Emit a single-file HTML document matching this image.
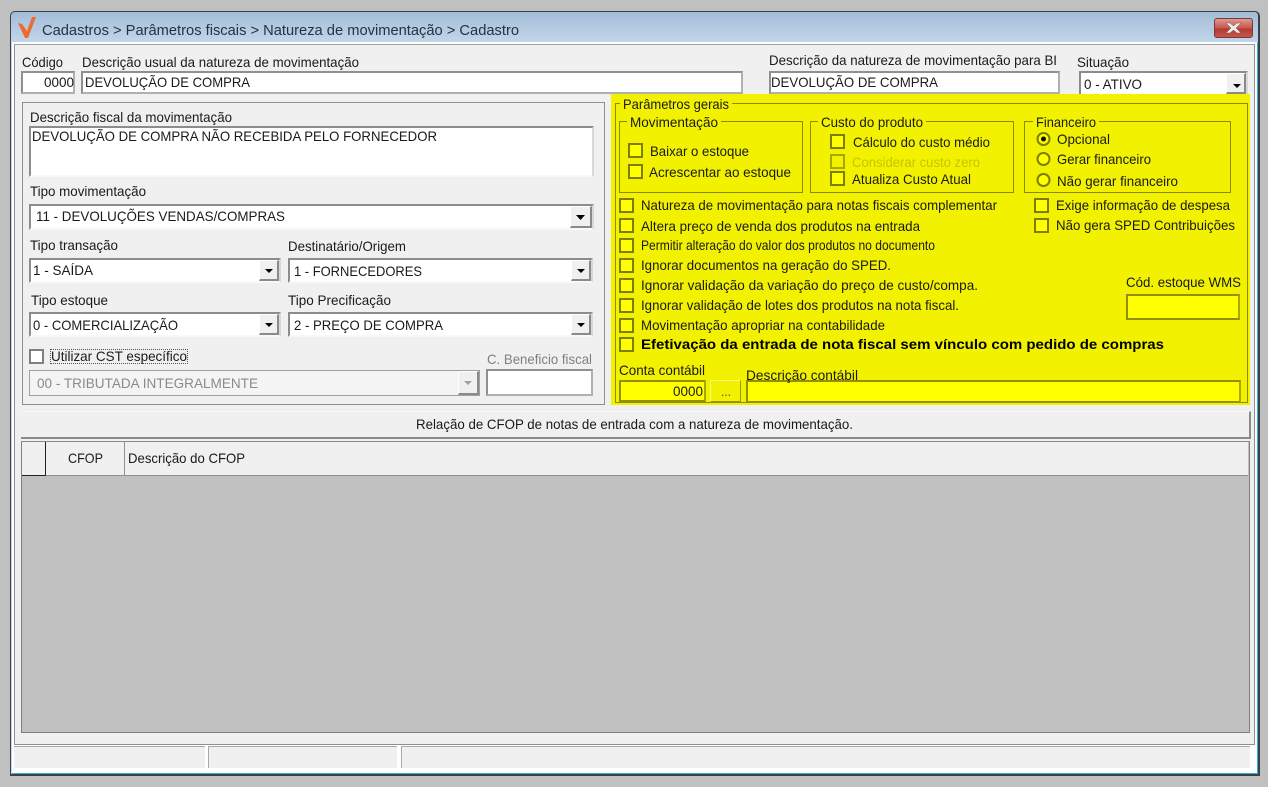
<!DOCTYPE html>
<html><head><meta charset="utf-8"><title>Cadastro</title>
<style>
html,body{margin:0;padding:0;width:1268px;height:787px;overflow:hidden;background:#c0c0c0}
#r{position:absolute;left:0;top:0;width:1268px;height:787px;overflow:hidden;filter:blur(.35px)}
#r div{position:absolute;box-sizing:border-box}
.f{background:#fff;border:2px solid #a0a0a0;border-top-color:#909090;border-left-color:#909090;border-right-color:#b0b0b0;border-bottom-color:#b0b0b0}
.c{background:#fff;border:2px solid #8c8c8c;border-right-color:#d8d8d8;border-bottom:2px solid #f8f8f8}
.y{background:#ff0;border:2px solid #8c8c00;border-color:#909000 #a8a800 #909000 #909000}
.b{background:#f0f0f0;border:1px solid #fff;border-right:2px solid #8a8a8a;border-bottom:2px solid #8a8a8a}
.k{background:#ff0;border:2px solid #7d7d00;width:15px;height:15px}
.g{border:1px solid #8c8c00}
.l{background:#f2f200;height:3px}
svg{position:absolute;left:0;top:0}
text{font-family:"Liberation Sans",sans-serif;font-size:14px;fill:#1a1a1a}
</style></head><body><div id="r">
<div style="left:10px;top:11px;width:1250px;height:765px;background:linear-gradient(#a3bdd8,#c6d9ec 34px);border:1px solid #3a4048;border-width:1px 2px 2px 1px;border-radius:5px 5px 0 0"></div>
<div style="left:12px;top:42px;width:1246px;height:732px;background:#fff;border-right:1px solid #33aed6;border-bottom:1px solid #33aed6"></div>
<div style="left:14px;top:44px;width:1241px;height:701px;background:#f0f0f0;border:1px solid #8f8f8f;border-top-color:#a0a0a0"></div>
<div style="left:14px;top:746px;width:1236px;height:23px;background:#f0f0f0;border-top:1px solid #a8a8a8"></div>
<div style="left:205px;top:746px;width:4px;height:23px;background:#fff;border-right:1px solid #a8a8a8"></div>
<div style="left:397px;top:746px;width:5px;height:23px;background:#fff;border-right:1px solid #a8a8a8"></div>
<div style="left:14px;top:768px;width:1243px;height:4px;background:#fff"></div>

<div style="left:1214px;top:18px;width:39px;height:20px;border:1px solid #7b3a38;border-radius:3px;background:linear-gradient(#dd9a92,#c8584c 50%,#b43a2c 55%,#c2584a)"></div>

<div class="f" style="left:21px;top:71px;width:54px;height:23px"></div>
<div class="f" style="left:81px;top:71px;width:662px;height:23px"></div>
<div class="f" style="left:769px;top:71px;width:291px;height:23px"></div>
<div class="c" style="left:1079px;top:71px;width:169px;height:26px"></div>
<div class="b" style="left:1226px;top:73px;width:20px;height:21px"></div>

<div style="left:22px;top:102px;width:583px;height:303px;border:1px solid #8f8f8f;border-width:1px"></div>
<div class="c" style="left:29px;top:126px;width:565px;height:51px"></div>
<div class="c" style="left:29px;top:204px;width:565px;height:26px"></div>
<div class="b" style="left:570px;top:206px;width:22px;height:22px"></div>
<div class="c" style="left:29px;top:258px;width:252px;height:25px"></div>
<div class="b" style="left:259px;top:260px;width:20px;height:21px"></div>
<div class="c" style="left:288px;top:258px;width:305px;height:25px"></div>
<div class="b" style="left:571px;top:260px;width:20px;height:21px"></div>
<div class="c" style="left:29px;top:312px;width:252px;height:25px"></div>
<div class="b" style="left:259px;top:314px;width:20px;height:21px"></div>
<div class="c" style="left:288px;top:312px;width:305px;height:25px"></div>
<div class="b" style="left:571px;top:314px;width:20px;height:21px"></div>
<div style="left:29px;top:349px;width:15px;height:15px;background:#fff;border:2px solid #808080"></div>
<div style="left:50px;top:349px;width:138px;height:15px;border:1px dotted #555"></div>
<div style="left:29px;top:370px;width:451px;height:26px;background:#f4f4f4;border:1px solid #a0a0a0"></div>
<div class="b" style="left:458px;top:371px;width:21px;height:24px"></div>
<div class="f" style="left:486px;top:369px;width:107px;height:27px"></div>

<div style="left:611px;top:94px;width:639px;height:311px;background:#f2f200"></div>
<div class="g" style="left:615px;top:103px;width:633px;height:300px;border-color:#8c8c00"></div>
<div class="g" style="left:619px;top:121px;width:184px;height:72px"></div>
<div class="g" style="left:810px;top:121px;width:204px;height:72px"></div>
<div class="g" style="left:1024px;top:121px;width:207px;height:72px"></div>
<div class="l" style="left:620px;top:102px;width:112px"></div>
<div class="l" style="left:627px;top:120px;width:94px"></div>
<div class="l" style="left:818px;top:120px;width:108px"></div>
<div class="l" style="left:1033px;top:120px;width:66px"></div>

<div class="k" style="left:628px;top:143px"></div>
<div class="k" style="left:628px;top:164px"></div>
<div class="k" style="left:830px;top:134px"></div>
<div class="k" style="left:830px;top:154px;background:#f2f200;border-color:#a8a800"></div>
<div class="k" style="left:830px;top:171px"></div>
<div class="k" style="left:619px;top:198px"></div>
<div class="k" style="left:619px;top:218px"></div>
<div class="k" style="left:619px;top:238px"></div>
<div class="k" style="left:619px;top:258px"></div>
<div class="k" style="left:619px;top:278px"></div>
<div class="k" style="left:619px;top:298px"></div>
<div class="k" style="left:619px;top:318px"></div>
<div class="k" style="left:619px;top:337px"></div>
<div class="k" style="left:1034px;top:198px"></div>
<div class="k" style="left:1034px;top:218px"></div>
<div class="y" style="left:1126px;top:294px;width:114px;height:26px"></div>
<div class="y" style="left:619px;top:380px;width:87px;height:22px"></div>
<div style="left:710px;top:380px;width:31px;height:22px;background:#f2f200;border:1px solid #fafa80;border-right:1px solid #9a9a00;border-bottom:1px solid #9a9a00"></div>
<div class="y" style="left:746px;top:380px;width:495px;height:23px"></div>

<div style="left:21px;top:411px;width:1230px;height:28px;background:#f0f0f0;border-top:1px solid #f8f8f8;border-right:2px solid #8a8a8a;border-bottom:2px solid #8a8a8a"></div>
<div style="left:21px;top:441px;width:1229px;height:292px;background:#c0c0c0;border:1px solid #7f7f7f;border-top-color:#8a8a8a"></div>
<div style="left:22px;top:442px;width:1226px;height:34px;background:#f0f0f0;border-bottom:1px solid #909090"></div>
<div style="left:22px;top:442px;width:24px;height:34px;background:#f0f0f0;border-right:1px solid #202020;border-bottom:1px solid #202020"></div>
<div style="left:124px;top:442px;width:1px;height:34px;background:#909090"></div>

<svg width="1268" height="787" viewBox="0 0 1268 787">
<path d="M18 23 L22 24 L27 31 L32 17 L36 17 L28 38 L25 38 Z" fill="#ef6a2c"/>
<path d="M1226 23 L1230 23 L1233.500 26 L1237 23 L1241 23 L1236 28 L1241 33 L1237 33 L1233.500 30 L1230 33 L1226 33 L1231 28 Z" fill="#ececec" stroke="#8c5048" stroke-width=".5"/>
<g fill="#000">
<path d="M1233 84 h8 l-4 4z"/><path d="M576 215 h9 l-4.500 5z"/><path d="M265 269 h8 l-4 4z"/><path d="M577 269 h8 l-4 4z"/><path d="M265 323 h8 l-4 4z"/><path d="M577 323 h8 l-4 4z"/>
</g>
<path d="M464 381 h8 l-4 4z" fill="#a0a0a0"/>
<g fill="#ff0" stroke="#7d7d00" stroke-width="2">
<circle cx="1043.500" cy="139" r="6"/><circle cx="1043.500" cy="159" r="6"/><circle cx="1043.500" cy="180" r="6"/>
</g>
<circle cx="1043.500" cy="139" r="2.500" fill="#111"/>

<text x="42" y="35" textLength="477" lengthAdjust="spacingAndGlyphs" style="font-size:15px;fill:#26323e">Cadastros &gt; Parâmetros fiscais &gt; Natureza de movimentação &gt; Cadastro</text>
<text x="22" y="67" textLength="41" lengthAdjust="spacingAndGlyphs">Código</text>
<text x="82" y="67" textLength="277" lengthAdjust="spacingAndGlyphs">Descrição usual da natureza de movimentação</text>
<text x="769" y="65" textLength="288" lengthAdjust="spacingAndGlyphs">Descrição da natureza de movimentação para BI</text>
<text x="1077" y="67" textLength="52" lengthAdjust="spacingAndGlyphs">Situação</text>
<text x="44" y="87" textLength="30" lengthAdjust="spacingAndGlyphs">0000</text>
<text x="85" y="87" textLength="165" lengthAdjust="spacingAndGlyphs">DEVOLUÇÃO DE COMPRA</text>
<text x="771" y="87" textLength="167" lengthAdjust="spacingAndGlyphs">DEVOLUÇÃO DE COMPRA</text>
<text x="1084" y="89" textLength="58" lengthAdjust="spacingAndGlyphs">0 - ATIVO</text>
<text x="30" y="122" textLength="202" lengthAdjust="spacingAndGlyphs">Descrição fiscal da movimentação</text>
<text x="32" y="141" textLength="405" lengthAdjust="spacingAndGlyphs">DEVOLUÇÃO DE COMPRA NÃO RECEBIDA PELO FORNECEDOR</text>
<text x="30" y="196" textLength="116" lengthAdjust="spacingAndGlyphs">Tipo movimentação</text>
<text x="36" y="221" textLength="249" lengthAdjust="spacingAndGlyphs">11 - DEVOLUÇÕES VENDAS/COMPRAS</text>
<text x="30" y="250" textLength="88" lengthAdjust="spacingAndGlyphs">Tipo transação</text>
<text x="33" y="275" textLength="60" lengthAdjust="spacingAndGlyphs">1 - SAÍDA</text>
<text x="288" y="251" textLength="118" lengthAdjust="spacingAndGlyphs">Destinatário/Origem</text>
<text x="294" y="276" textLength="128" lengthAdjust="spacingAndGlyphs">1 - FORNECEDORES</text>
<text x="31" y="305" textLength="77" lengthAdjust="spacingAndGlyphs">Tipo estoque</text>
<text x="33" y="330" textLength="145" lengthAdjust="spacingAndGlyphs">0 - COMERCIALIZAÇÃO</text>
<text x="288" y="305" textLength="103" lengthAdjust="spacingAndGlyphs">Tipo Precificação</text>
<text x="294" y="330" textLength="149" lengthAdjust="spacingAndGlyphs">2 - PREÇO DE COMPRA</text>
<text x="51" y="361" textLength="136" lengthAdjust="spacingAndGlyphs">Utilizar CST específico</text>
<text x="37" y="388" textLength="221" lengthAdjust="spacingAndGlyphs" style="fill:#8a8a8a">00 - TRIBUTADA INTEGRALMENTE</text>
<text x="487" y="364" textLength="105" lengthAdjust="spacingAndGlyphs" style="fill:#808080">C. Beneficio fiscal</text>

<text x="623" y="109" textLength="106" lengthAdjust="spacingAndGlyphs">Parâmetros gerais</text>
<text x="630" y="127" textLength="88" lengthAdjust="spacingAndGlyphs">Movimentação</text>
<text x="821" y="127" textLength="102" lengthAdjust="spacingAndGlyphs">Custo do produto</text>
<text x="1036" y="127" textLength="60" lengthAdjust="spacingAndGlyphs">Financeiro</text>
<text x="650" y="156" textLength="99" lengthAdjust="spacingAndGlyphs">Baixar o estoque</text>
<text x="649" y="177" textLength="142" lengthAdjust="spacingAndGlyphs">Acrescentar ao estoque</text>
<text x="853" y="147" textLength="137" lengthAdjust="spacingAndGlyphs">Cálculo do custo médio</text>
<text x="852" y="167" textLength="128" lengthAdjust="spacingAndGlyphs" style="fill:#c4c400">Considerar custo zero</text>
<text x="852" y="184" textLength="119" lengthAdjust="spacingAndGlyphs">Atualiza Custo Atual</text>
<text x="1057" y="144" textLength="53" lengthAdjust="spacingAndGlyphs">Opcional</text>
<text x="1057" y="164" textLength="94" lengthAdjust="spacingAndGlyphs">Gerar financeiro</text>
<text x="1057" y="186" textLength="121" lengthAdjust="spacingAndGlyphs">Não gerar financeiro</text>
<text x="641" y="210" textLength="356" lengthAdjust="spacingAndGlyphs">Natureza de movimentação para notas fiscais complementar</text>
<text x="641" y="231" textLength="279" lengthAdjust="spacingAndGlyphs">Altera preço de venda dos produtos na entrada</text>
<text x="641" y="250" textLength="294" lengthAdjust="spacingAndGlyphs">Permitir alteração do valor dos produtos no documento</text>
<text x="641" y="270" textLength="250" lengthAdjust="spacingAndGlyphs">Ignorar documentos na geração do SPED.</text>
<text x="641" y="290" textLength="337" lengthAdjust="spacingAndGlyphs">Ignorar validação da variação do preço de custo/compa.</text>
<text x="641" y="310" textLength="318" lengthAdjust="spacingAndGlyphs">Ignorar validação de lotes dos produtos na nota fiscal.</text>
<text x="641" y="330" textLength="244" lengthAdjust="spacingAndGlyphs">Movimentação apropriar na contabilidade</text>
<text x="641" y="349" textLength="523" lengthAdjust="spacingAndGlyphs" style="font-weight:bold;fill:#000">Efetivação da entrada de nota fiscal sem vínculo com pedido de compras</text>
<text x="1056" y="210" textLength="174" lengthAdjust="spacingAndGlyphs">Exige informação de despesa</text>
<text x="1056" y="230" textLength="179" lengthAdjust="spacingAndGlyphs">Não gera SPED Contribuições</text>
<text x="1126" y="287" textLength="115" lengthAdjust="spacingAndGlyphs">Cód. estoque WMS</text>
<text x="619" y="375" textLength="86" lengthAdjust="spacingAndGlyphs">Conta contábil</text>
<text x="673" y="396" textLength="30" lengthAdjust="spacingAndGlyphs">0000</text>
<text x="721" y="396" textLength="10" lengthAdjust="spacingAndGlyphs" style="fill:#555">...</text>
<text x="746" y="380" textLength="112" lengthAdjust="spacingAndGlyphs">Descrição contábil</text>
<text x="416" y="429" textLength="437" lengthAdjust="spacingAndGlyphs">Relação de CFOP de notas de entrada com a natureza de movimentação.</text>
<text x="68" y="463" textLength="35" lengthAdjust="spacingAndGlyphs">CFOP</text>
<text x="128" y="463" textLength="117" lengthAdjust="spacingAndGlyphs">Descrição do CFOP</text>
</svg>
</div></body></html>
